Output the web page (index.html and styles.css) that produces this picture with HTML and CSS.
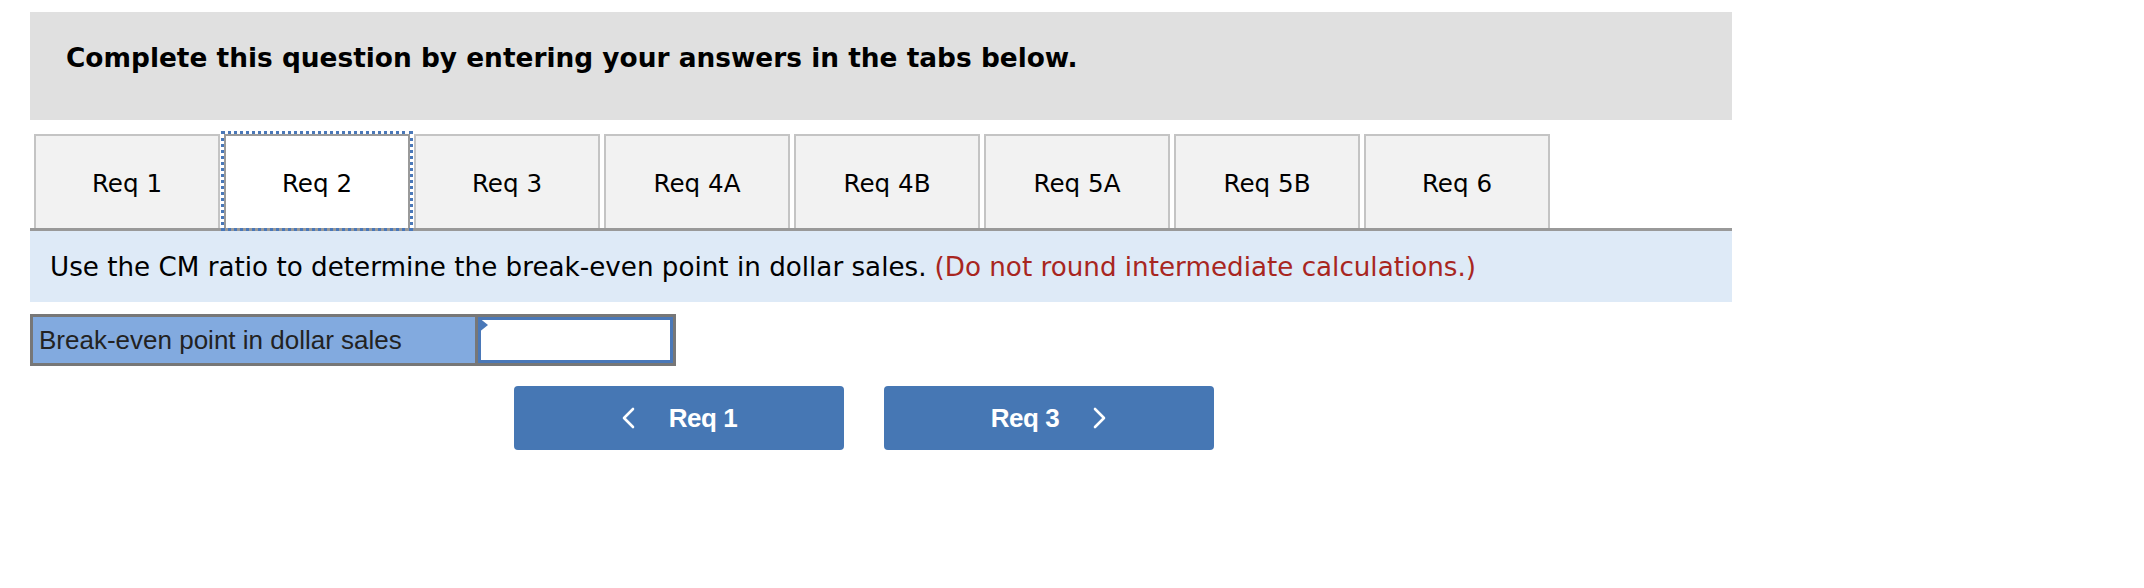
FILE: index.html
```html
<!DOCTYPE html>
<html>
<head>
<meta charset="utf-8">
<link rel="stylesheet" href="styles.css">
</head>
<body>
<div class="page">
  <div class="header">
    <h2 class="heading">Complete this question by entering your answers in the tabs below.</h2>
  </div>
  <div class="tabs">
    <div class="tab">Req 1</div>
    <div class="tab tab-active">Req 2</div>
    <div class="tab">Req 3</div>
    <div class="tab">Req 4A</div>
    <div class="tab">Req 4B</div>
    <div class="tab">Req 5A</div>
    <div class="tab">Req 5B</div>
    <div class="tab">Req 6</div>
  </div>
  <div class="instr">Use the CM ratio to determine the break-even point in dollar sales. <span class="note">(Do not round intermediate calculations.)</span></div>
  <div class="answer">
    <div class="answer-label">Break-even point in dollar sales</div>
    <div class="answer-cell"><span class="answer-input"></span><span class="marker"></span></div>
  </div>
  <div class="nav">
    <div class="nav-btn">
      <svg class="chev" width="14" height="22" viewBox="0 0 14 22"><path d="M12 2 L3 11 L12 20" fill="none" stroke="#fff" stroke-width="2.6" stroke-linecap="round" stroke-linejoin="round"/></svg>
      <span class="nav-text">Req 1</span>
    </div>
    <div class="nav-btn">
      <span class="nav-text">Req 3</span>
      <svg class="chev" width="14" height="22" viewBox="0 0 14 22"><path d="M2 2 L11 11 L2 20" fill="none" stroke="#fff" stroke-width="2.6" stroke-linecap="round" stroke-linejoin="round"/></svg>
    </div>
  </div>
</div>
</body>
</html>
```
FILE: styles.css
```css
html, body {
  margin: 0;
  padding: 0;
  background: #fff;
}
.page {
  padding: 12px 0 0 30px;
  width: 1702px;
  font-family: "DejaVu Sans", Verdana, sans-serif;
  color: #000;
}
.header {
  background: #e0e0e0;
  height: 108px;
  box-sizing: border-box;
  padding: 30px 0 0 36px;
}
.heading {
  margin: 0;
  font-size: 26.4px;
  font-weight: bold;
  line-height: 32px;
}
.tabs {
  display: flex;
  gap: 4px;
  padding-left: 4px;
  margin-top: 14px;
}
.tab {
  width: 186px;
  height: 94px;
  box-sizing: border-box;
  border: 2px solid #c4c4c4;
  border-bottom: none;
  background: #f2f2f2;
  display: flex;
  align-items: center;
  justify-content: center;
  font-size: 24.6px;
  padding-top: 2px;
}
.tab-active {
  background: #fff;
  border-color: #9a9a9a;
  outline: 3px dotted #4a78b8;
  outline-offset: 0;
  position: relative;
  z-index: 1;
}
.instr {
  border-top: 3px solid #999;
  background: #deeaf7;
  height: 71px;
  box-sizing: content-box;
  display: flex;
  align-items: center;
  padding-left: 20px;
  font-size: 26.2px;
}
.note {
  color: #a8261f;
  margin-left: 8px;
}
.answer {
  margin-top: 12px;
  display: flex;
  width: 646px;
  height: 52px;
  box-sizing: border-box;
  border: 3px solid #777;
}
.answer-label {
  width: 445px;
  background: #82aadf;
  border-right: 3px solid #777;
  display: flex;
  align-items: center;
  padding-left: 6px;
  box-sizing: border-box;
  font-family: "Liberation Sans", Arial, sans-serif;
  font-size: 26px;
  color: #222;
}
.answer-cell {
  flex: 1;
  position: relative;
  background: #fff;
  display: flex;
}
.answer-input {
  flex: 1;
  border: 3px solid #4a78b8;
  margin: 0;
}
.marker {
  position: absolute;
  left: 0;
  top: 0;
  width: 0;
  height: 0;
  border-top: 8px solid transparent;
  border-bottom: 8px solid transparent;
  border-left: 10px solid #4a78b8;
}
.nav {
  display: flex;
  gap: 40px;
  margin-top: 20px;
  margin-left: 484px;
}
.nav-btn {
  width: 330px;
  height: 64px;
  background: #4677b4;
  border-radius: 4px;
  display: flex;
  align-items: center;
  justify-content: center;
  gap: 34px;
  color: #fff;
  font-family: "Liberation Sans", Arial, sans-serif;
  font-weight: bold;
  font-size: 26px;
}
.nav-text {
  letter-spacing: -0.5px;
}
.chev {
  display: block;
}
```
